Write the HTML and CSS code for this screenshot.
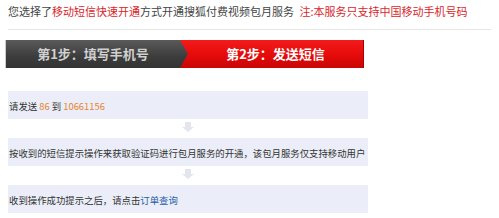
FILE: index.html
```html
<!DOCTYPE html>
<html lang="zh-CN">
<head>
  <meta charset="UTF-8">
  <title>包月服务开通</title>
  <link rel="stylesheet" href="styles.css">
</head>
<body>
  <div class="page">
    <div class="notice">
      您选择了<span class="red">移动短信快速开通</span>方式开通搜狐付费视频包月服务
      <span class="red note">注:本服务只支持中国移动手机号码</span>
    </div>

    <div class="steps">
      <div class="step step-done">第1步：填写手机号</div>
      <div class="step step-now">第2步：发送短信</div>
    </div>

    <div class="flow">
      <div class="row">请发送 <span class="num">86</span> 到 <span class="num">10661156</span></div>
      <div class="down"></div>
      <div class="row">按收到的短信提示操作来获取验证码进行包月服务的开通，该包月服务仅支持移动用户</div>
      <div class="down"></div>
      <div class="row">收到操作成功提示之后，请点击<a class="link" href="#">订单查询</a></div>
    </div>
  </div>
</body>
</html>
```

FILE: styles.css
```css
body {
  margin: 0;
  background: #fff;
  font-family: "Noto Sans CJK SC", "Liberation Sans", sans-serif;
  color: #333;
}

.page {
  padding: 0 8px;
}

.notice {
  height: 29px;
  line-height: 23px;
  font-size: 11px;
  border-bottom: 1px solid #e6e6e6;
  white-space: nowrap;
  color: #444;
}

.red {
  color: #d8262c;
}

.note {
  margin-left: 3px;
}

.steps {
  display: flex;
  margin: 10px 0 0 -3px;
  height: 28px;
}

.step {
  font-size: 13px;
  font-weight: 600;
  line-height: 28px;
  text-align: center;
  box-sizing: border-box;
}

.step-done {
  position: relative;
  z-index: 1;
  width: 183px;
  color: #d0d0d0;
  background: linear-gradient(#5a5a5a, #3c3c3c 60%, #333);
  border-left: 1px solid #ccc;
  padding-right: 8px;
  clip-path: polygon(0 0, 175px 0, 100% 50%, 175px 100%, 0 100%);
}

.step-now {
  width: 184px;
  margin-left: -8px;
  padding-left: 8px;
  color: #fff;
  background: linear-gradient(#f21b1b, #e60a0a 55%, #c80606);
  border-right: 1px solid #a80000;
}

.flow {
  margin-top: 23px;
  width: 360px;
}

.row {
  height: 28px;
  line-height: 30px;
  font-size: 9.4px;
  background: #ebeef8;
  padding-left: 1px;
  white-space: nowrap;
  color: #333;
}

.num {
  color: #e8822e;
}

.link {
  color: #1f5ea8;
  text-decoration: none;
}

.down {
  height: 16px;
}

.down::before {
  content: "";
  display: block;
  width: 6px;
  height: 5px;
  margin: 3px 0 0 177px;
  background: #e3e6ee;
}

.down::after {
  content: "";
  display: block;
  width: 0;
  height: 0;
  margin-left: 174px;
  border-left: 6px solid transparent;
  border-right: 6px solid transparent;
  border-top: 5px solid #e3e6ee;
}
```
